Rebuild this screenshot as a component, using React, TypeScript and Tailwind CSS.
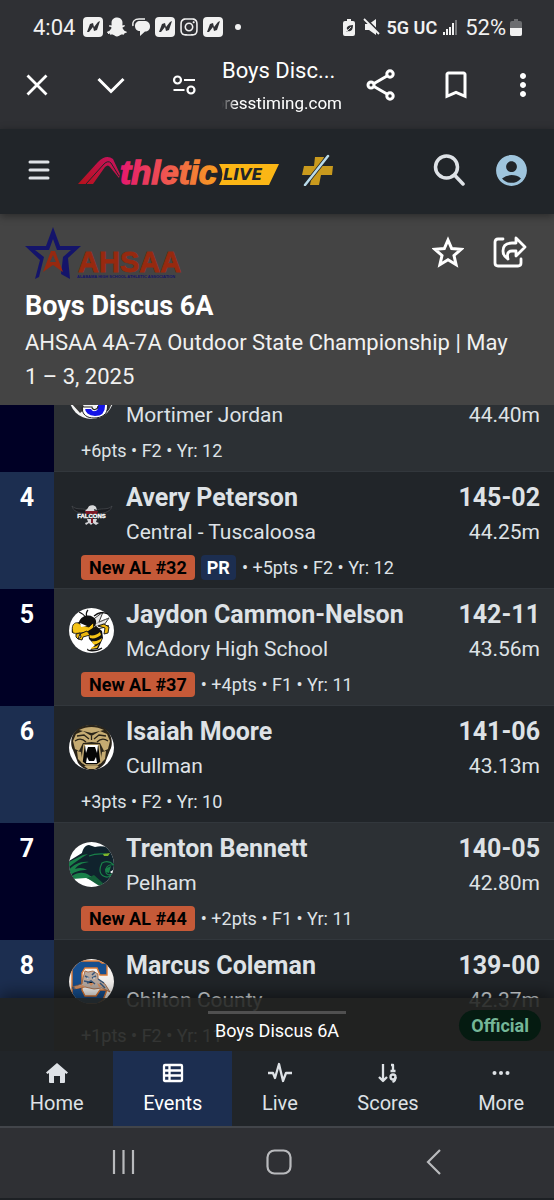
import type { ReactNode } from "react"
import { FaInstagram, FaSnapchatGhost } from "react-icons/fa"
import { MdAccountCircle, MdBookmarkBorder, MdMoreVert } from "react-icons/md"

type Result = {
  place: number
  name: string
  school: string
  mark: string
  metric: string
  rank?: string
  pr?: boolean
  points: number
  flight: number
  year: number
  logo: ReactNode
}

const JordanLogo = () => (
  <svg viewBox="0 0 45 45" className="size-[45px]" aria-hidden="true">
    <circle cx="22.5" cy="22.5" r="22.5" fill="#f4f4f4" />
    <path d="M2 29h11l3 6-5 4zM33 29h10l-3 7-5 3z" fill="#3a3a3a" />
    <path d="M24 12h13v20c0 8-5 11-11 11-7 0-11-4-11-9h8c0 3 5 3 5-1V18h-4z" fill="#1414e6" stroke="#fff" strokeWidth="2" />
    <path d="M13 33c0 8 5 11 12 11 8 0 14-4 14-12V11" fill="none" stroke="#222" />
    <path d="M13 33h10c0 4 6 3 6-1" fill="none" stroke="#222" strokeWidth="1.2" />
  </svg>
)

const FalconsLogo = () => (
  <svg viewBox="0 0 45 45" className="size-[45px]" aria-hidden="true">
    <path d="M20 20C14 16 8 20 3 15c1 5 6 7 14 8M26 20c6-4 12 0 17-5-1 5-6 7-14 8" fill="#191b1f" stroke="#4b4e52" strokeWidth=".7" />
    <path d="M19 17c0-3 6-4 8-1l1 3-3-1 1 4h-7l-3-2z" fill="#d9d9db" />
    <path d="M16 20h13l-1 3H17z" fill="#7d1926" />
    <path d="M18 28h10l-1 3 3 1-3 2-3-2-2 2-2-2-3 2-1-2 3-1z" fill="#d5d5d8" />
    <path d="M22 27h2v5h-2z" fill="#7d1926" />
    <text x="22.5" y="27" textAnchor="middle" fontSize="6" fontWeight="700" fill="#fff" stroke="#fff" strokeWidth=".3" fontFamily="Liberation Sans, sans-serif">FALCONS</text>
  </svg>
)

const HornetLogo = () => (
  <svg viewBox="0 0 45 45" className="size-[45px]" aria-hidden="true">
    <circle cx="22.5" cy="22.5" r="22.5" fill="#fff" />
    <path d="M22 13l12-9-4 10 10-4-5 7 5 1-11 3z" fill="#e8e8e8" stroke="#222" strokeWidth=".9" />
    <path d="M26 16l14-6M27 18l10-3" stroke="#777" strokeWidth=".6" />
    <path d="M10 4c3 1 5 3 7 6M19 2c-2 2-2 5-1 8M25 8c5-4 8-4 14-2" fill="none" stroke="#111" strokeWidth="1.3" />
    <path d="M10 14c2-6 9-8 14-5 4 2 4 7 1 10l-5 4H8L3 25c-1-5 2-9 7-11z" fill="#111" />
    <path d="M4 17c2-3 5-3 8 0l8 2 4-4c2 5-1 9-7 9-6 1-10 2-13 1-1-3-1-6 0-8z" fill="#f6c416" stroke="#111" strokeWidth=".8" />
    <path d="M11 15l7 3-6 1z" fill="#fff" />
    <path d="M19 23l8-5 6 5 1 7-5 11-8 1 5-5-6-6z" fill="#111" />
    <path d="M20 27c4 1 8 0 11-3l1 3c-4 3-7 4-11 3zM23 33c4 1 7-1 10-3l-1 3c-3 3-6 4-8 3zM23 39c3 0 5-1 7-3l-2 4-6 1z" fill="#f6c416" />
    <path d="M18 23l-7 3-2 5 4 1 1-3 7-2zM29 18l7 2-1 6 4-1 1-6-5-3zM7 26l4-1 1 4-3 2-2-2z" fill="#eab60e" stroke="#111" strokeWidth=".9" />
    <path d="M19 41c-2 2 8 3 14-1" fill="none" stroke="#111" strokeWidth="1.3" />
  </svg>
)

const BearcatLogo = () => (
  <svg viewBox="0 0 45 45" className="size-[45px]" aria-hidden="true">
    <circle cx="22.5" cy="22.5" r="22.5" fill="#fff" />
    <path d="M5 8C10 1 16 0 22.5 0S35 1 40 8c3 4 4 12 1 17l-5 13c-4 5-8 7-13.5 7S13 43 9 38L4 25C1 20 2 12 5 8z" fill="#2a2419" />
    <path d="M7 9l7-3 8.5 5L31 6l7 3 3 7-2 8-4 2-4-8-8.5-1-8.5 1-4 8-4-2-2-8z" fill="#c5ab72" />
    <path d="M10 5c8-4 17-4 25 0l-4 1-8.5 2L14 6z" fill="#c5ab72" />
    <path d="M8 11l7-1 5 4M37 11l-7-1-5 4M6 16c4-3 8-2 11 1M39 16c-4-3-8-2-11 1M22.5 11v4" fill="none" stroke="#2a2419" strokeWidth="1.3" />
    <path d="M8 26l4 1 2 12-5-5zM37 26l-4 1-2 12 5-5zM15 41h15l-4 3h-7z" fill="#c5ab72" />
    <path d="M15 20h15l2 17-4 3H17l-4-3z" fill="#060606" stroke="#c5ab72" strokeWidth="1.5" />
    <path d="M16 20h13l-1 8-2-6h-7l-2 6zM17 38l1-6 2 4h5l2-4 1 6z" fill="#fff" />
  </svg>
)

const PantherLogo = () => (
  <svg viewBox="0 0 45 45" className="size-[45px]" aria-hidden="true">
    <defs>
      <clipPath id="panther-clip"><circle cx="22.5" cy="22.5" r="22.5" /></clipPath>
    </defs>
    <g clipPath="url(#panther-clip)">
      <path d="M0 0h45v45H0z" fill="#fff" />
      <path d="M0 19l13-8c1-4 3-8 7-8l6 2c9-2 15 1 20 5v28L32 45 21 34 0 37z" fill="#10232d" />
      <path d="M0 20l14-7 5-1C12 16 6 20 0 25zM0 28c5-6 12-9 20-8-7 1-11 3-14 7 5-2 9-1 12 1-6 0-11 1-17 5zM3 34c6-4 12-4 17-1l8 7-11-4-14 1z" fill="#198049" />
      <path d="M20 14c7-3 12-2 17-2M33 21c5-3 9-1 12 2-4-1-7 1-8 4-1 5 2 7 6 5-4 6-12 2-12-4 0-3 1-5 2-7z" fill="none" stroke="#198049" strokeWidth="1.2" />
      <path d="M34 12l7-1-2 3h-4z" fill="#7fb42c" />
      <path d="M36 27l6-3-2 7-3-1z" fill="#198049" />
      <path d="M41 30l3-2v4z" fill="#fff" />
      <path d="M18 36l14 9 4-2-11-10z" fill="#14603a" />
    </g>
  </svg>
)

const TigerLogo = () => (
  <svg viewBox="0 0 45 45" className="size-[45px]" aria-hidden="true">
    <defs>
      <clipPath id="tiger-clip"><circle cx="22.5" cy="22.5" r="22.5" /></clipPath>
    </defs>
    <g clipPath="url(#tiger-clip)">
      <path d="M0 0h45v45H0z" fill="#f5f2ef" />
      <path d="M10 2h20l3 2h5v12h-7l-3-7H16l-3 5v17l3 6h11l4-6h7l-4 10-6 4H11l-8-8V10z" fill="#174f8f" stroke="#e07b34" strokeWidth="1.4" />
      <path d="M16 12l3 1 5-1 5 3v5l7 5 5 8-8-4-8 1-9-2-11 2-2-2 10-3 1-6z" fill="#b8aaa1" stroke="#9b5a32" strokeWidth=".8" />
      <path d="M16 17l4 2M27 17l-4 2M18 24l4-2 4 3M3 29l10-1M31 24l5 5M15 22l5 1M29 20l6 4M26 13l-3 3" stroke="#39577b" strokeWidth="1.5" />
      <path d="M20 24h5l-3 3zM5 28l9-2 2 2-9 2zM28 24l5 3-3 1z" fill="#d98f5d" />
      <circle cx="19" cy="19" r=".7" fill="#fff" />
      <circle cx="25" cy="19" r=".7" fill="#fff" />
    </g>
  </svg>
)

const results: Result[] = [
  { place: 3, name: "", school: "Mortimer Jordan", mark: "", metric: "44.40m", points: 6, flight: 2, year: 12, logo: <JordanLogo /> },
  { place: 4, name: "Avery Peterson", school: "Central - Tuscaloosa", mark: "145-02", metric: "44.25m", rank: "New AL #32", pr: true, points: 5, flight: 2, year: 12, logo: <FalconsLogo /> },
  { place: 5, name: "Jaydon Cammon-Nelson", school: "McAdory High School", mark: "142-11", metric: "43.56m", rank: "New AL #37", points: 4, flight: 1, year: 11, logo: <HornetLogo /> },
  { place: 6, name: "Isaiah Moore", school: "Cullman", mark: "141-06", metric: "43.13m", points: 3, flight: 2, year: 10, logo: <BearcatLogo /> },
  { place: 7, name: "Trenton Bennett", school: "Pelham", mark: "140-05", metric: "42.80m", rank: "New AL #44", points: 2, flight: 1, year: 11, logo: <PantherLogo /> },
  { place: 8, name: "Marcus Coleman", school: "Chilton County", mark: "139-00", metric: "42.37m", points: 1, flight: 2, year: 11, logo: <TigerLogo /> },
]

const NewsIcon = () => (
  <svg viewBox="0 0 20 20" className="size-5" aria-hidden="true">
    <rect width="20" height="20" rx="4" fill="#f1f1f1" />
    <path d="M4 15l3-8 3-1 1 4 4-5 2-1-3 9-3 1-1-4-4 5z" fill="#2f3034" />
  </svg>
)

const StatusBar = () => (
  <div className="flex h-[54px] items-center justify-between pl-[33px] pr-8 text-[#f1f1f1]">
    <div className="flex items-center gap-1">
      <span className="mr-1 text-[22px]">4:04</span>
      <NewsIcon />
      <FaSnapchatGhost className="size-5" />
      <svg viewBox="0 0 20 20" className="size-5" aria-hidden="true">
        <path d="M9 4h4c4 0 6 2 6 5.500s-2 5-5 5L9 19v-5c-3 0-5-2-5-5s2-5 5-5z" fill="#f1f1f1" />
        <path d="M2 9C1 4 4 2 8 2h6" fill="none" stroke="#f1f1f1" strokeWidth="1.4" />
      </svg>
      <NewsIcon />
      <FaInstagram className="size-5" />
      <NewsIcon />
      <span className="ml-2 size-[6px] rounded-full bg-[#f1f1f1]" />
    </div>
    <div className="flex items-center">
      <svg viewBox="0 0 12 17" className="h-[17px] w-3" aria-hidden="true">
        <path d="M4 0h4v2h2q2 0 2 2v11q0 2-2 2H2q-2 0-2-2V4q0-2 2-2h2z" fill="#f1f1f1" />
        <path d="M3 13l2-2c-3-2 0-5 5-5 0 5-2 7-5 6" fill="#2f3034" />
        <path d="M4 12l4-4" stroke="#f1f1f1" strokeWidth=".8" />
      </svg>
      <svg viewBox="0 0 18 18" className="ml-2 size-[18px]" aria-hidden="true">
        <path d="M2 6h4l7-5v16l-7-5H2z" fill="#f1f1f1" />
        <path d="M2 0l16 16" stroke="#2f3034" strokeWidth="2" />
        <path d="M1 1l15 15" stroke="#f1f1f1" strokeWidth="1.8" />
      </svg>
      <span className="ml-[6px] text-[18px] font-semibold">5G UC</span>
      <svg viewBox="0 0 14 15" className="ml-[6px] h-[15px] w-[14px]" aria-hidden="true">
        <path d="M1 15v-3M4 15v-6M7 15V7M10 15V3" stroke="#f1f1f1" strokeWidth="2" />
        <path d="M13 15V0" stroke="#77787b" strokeWidth="2" />
      </svg>
      <span className="ml-2 text-[22px]">52%</span>
      <svg viewBox="0 0 12 17" className="ml-1 h-[17px] w-3" aria-hidden="true">
        <path d="M4 0h4v2h2q2 0 2 2v11q0 2-2 2H2q-2 0-2-2V4q0-2 2-2h2z" fill="#6c6d70" />
        <path d="M0 9h12v6q0 2-2 2H2q-2 0-2-2z" fill="#f1f1f1" />
      </svg>
    </div>
  </div>
)

const BrowserBar = () => (
  <div className="flex h-[75px] items-center pb-[13px] pl-[25px] pr-6 text-white">
    <button aria-label="Close tab">
      <svg viewBox="0 0 24 24" className="size-6" fill="none" stroke="currentColor" strokeWidth="2.8"><path d="M2.500 2.500l19 19M21.500 2.500l-19 19" /></svg>
    </button>
    <button aria-label="Minimize" className="ml-12">
      <svg viewBox="0 0 28 24" className="h-6 w-7" fill="none" stroke="currentColor" strokeWidth="3"><path d="M1.500 6L14 18.500 26.500 6" /></svg>
    </button>
    <button aria-label="Site settings" className="ml-[47px]">
      <svg viewBox="0 0 24 24" className="size-6" fill="none" stroke="currentColor" strokeWidth="2.200">
        <circle cx="5.500" cy="7" r="3.500" />
        <circle cx="19" cy="17" r="3.500" />
        <path d="M12 7h11M1.500 17h11" />
      </svg>
    </button>
    <div className="ml-[26px] w-[120px] overflow-hidden whitespace-nowrap pt-1">
      <div className="text-[22px] leading-8">Boys Disc...</div>
      <div className="flex justify-end text-[17px] leading-8 [mask-image:linear-gradient(to_right,transparent,black_14px)]">presstiming.com</div>
    </div>
    <div className="ml-auto flex items-center gap-[42px]">
      <button aria-label="Share link">
        <svg viewBox="0 0 30 32" className="h-8 w-[30px]" fill="none" stroke="currentColor" strokeWidth="3">
          <circle cx="5" cy="16" r="3" />
          <circle cx="24" cy="5" r="3.200" />
          <circle cx="24" cy="27" r="3.200" />
          <path d="M8 14.500L21 7M8 17.500L21 25" />
        </svg>
      </button>
      <button aria-label="Bookmark"><MdBookmarkBorder className="size-9" /></button>
      <button aria-label="Browser menu" className="-mx-[11px]"><MdMoreVert className="size-9" /></button>
    </div>
  </div>
)

const AppHeader = () => (
  <header className="relative z-10 flex h-[85px] items-center bg-[#212529] px-7 pb-[3px] text-[#dee2e6] shadow-[0_2px_8px_rgba(0,0,0,0.4)]">
    <button aria-label="Menu">
      <svg viewBox="0 0 22 20" className="h-5 w-[22px]" stroke="currentColor" strokeWidth="3" strokeLinecap="round"><path d="M2 2h18M2 10h18M2 18h18" /></svg>
    </button>
    <a href="#home" aria-label="Athletic Live" className="ml-7">
      <svg viewBox="0 0 202 32" className="h-8 w-[202px]">
        <defs>
          <linearGradient id="word" gradientUnits="userSpaceOnUse" x1="42" y1="0" x2="142" y2="0">
            <stop offset="0" stopColor="#e5176e" />
            <stop offset=".5" stopColor="#ef5a4e" />
            <stop offset="1" stopColor="#f7a21c" />
          </linearGradient>
          <linearGradient id="track" x1="0" y1="1" x2="1" y2="0">
            <stop offset="0" stopColor="#b5121b" />
            <stop offset="1" stopColor="#c91361" />
          </linearGradient>
        </defs>
        <path d="M0 30L20 8q8-8 15-3l7 15-1 4-9-11q-2-3-5 0L15 30z" fill="url(#track)" />
        <path d="M8 30L26 10q4-4 7-1l8 13" fill="none" stroke="#212529" />
        <text x="42" y="30" fontFamily="Liberation Sans, Arial, sans-serif" fontSize="33" fontWeight="700" fontStyle="italic" fill="url(#word)" stroke="url(#word)" strokeWidth="1.4">thletic</text>
        <path d="M141 10h60l-10 21h-50q7-11 0-21z" fill="#fbb615" />
        <text x="145" y="26" fontFamily="DejaVu Sans, sans-serif" fontSize="16" fontWeight="700" fontStyle="italic" fill="#212529">LIVE</text>
      </svg>
    </a>
    <a href="#plus" aria-label="Plus" className="ml-[22px]">
      <svg viewBox="0 0 32 32" className="size-8">
        <path d="M13 3h9l-2 9h11l-1 9H19l-2 10H8l2-10H0l2-9h10z" fill="#c99a1d" />
        <path d="M26 2L3 31" stroke="#212529" strokeWidth="4" />
        <path d="M26 2L3 31" stroke="#b9dbea" strokeWidth="2.500" strokeLinecap="round" />
      </svg>
    </a>
    <button aria-label="Search" className="ml-auto">
      <svg viewBox="0 0 32 32" className="size-8" fill="none" stroke="currentColor" strokeWidth="3.500" strokeLinecap="round">
        <circle cx="13.500" cy="13" r="11" />
        <path d="M21.500 21L30 30" />
      </svg>
    </button>
    <button aria-label="Account" className="-mr-1 ml-7"><MdAccountCircle className="size-[37px] text-[#9fc5dd]" /></button>
  </header>
)

const EventHeader = () => (
  <section className="bg-[#444444] px-[25px] pb-[11px] pt-3 text-white">
    <div className="flex items-start justify-between">
      <svg viewBox="0 0 160 54" className="h-[54px] w-40" role="img" aria-label="AHSAA">
        <path d="M28 1l7 19h21L43 32l2 21-9-5 2-17 8-7H32L28 13l-4 11H10l9 7-5 20-4 2 5-19L0 20h21z" fill="#14146a" />
        <path d="M26 25h4l8 21-10-7-10 7zM28 29l-3 7h6z" fill="#97290f" fillRule="evenodd" />
        <text x="53" y="46" fontFamily="Liberation Sans, Arial, sans-serif" fontSize="29" fontWeight="700" fill="#97290f" stroke="#97290f" strokeWidth=".8">AHSAA</text>
        <text x="52" y="52" fontFamily="Liberation Sans, Arial, sans-serif" fontSize="4" fontWeight="700" fill="#14146a">ALABAMA HIGH SCHOOL ATHLETIC ASSOCIATION</text>
      </svg>
      <div className="flex items-center gap-[29px] pr-[2px] pt-[10px]">
        <button aria-label="Favorite">
          <svg viewBox="0 0 32 32" className="size-8" fill="none" stroke="currentColor" strokeWidth="3"><path d="M16 4l3.700 8.500 9.300.8-7 6.200 2.100 9.200-8.100-4.900-8.100 4.900L10 19.500l-7-6.200 9.300-.8z" /></svg>
        </button>
        <button aria-label="Share event">
          <svg viewBox="0 0 34 32" className="h-8 w-[34px]" fill="none" stroke="currentColor" strokeWidth="2.800" strokeLinecap="round" strokeLinejoin="round">
            <path d="M10 3H5q-3 0-3 3v21q0 3 3 3h20q3 0 3-3v-4" />
            <path d="M23 2l9 9-9 9v-5h-4q-6 0-4 8-5-3-5-8 0-8 9-8h4z" />
          </svg>
        </button>
      </div>
    </div>
    <h1 className="mt-[10px] text-[27px] font-bold leading-8">Boys Discus 6A</h1>
    <p className="mt-1 pr-3 text-[22px] leading-[34px] text-[#f1f1f1]">AHSAA 4A-7A Outdoor State Championship | May 1 – 3, 2025</p>
  </section>
)

const ResultRow = ({ result }: { result: Result }) => {
  const odd = result.place % 2 === 1
  return (
    <li className={odd ? "flex bg-[#2c3034]" : "flex bg-[#212529]"}>
      <div className={odd ? "w-[54px] shrink-0 bg-[#000025] pt-[9px] text-center text-[25px] font-bold leading-[34px] text-white" : "w-[54px] shrink-0 bg-[#1c2e50] pt-[9px] text-center text-[25px] font-bold leading-[34px] text-white"}>
        {result.place}
      </div>
      <div className="min-w-0 flex-1 border-b border-[#32373c] pb-[3px] pl-[15px] pr-[14px] pt-[9px]">
        <div className="flex">
          <div className="w-[57px] shrink-0 pt-[10px]">{result.logo}</div>
          <div className="min-w-0 flex-1 text-[21px] leading-[34px]">
            <h2 className="min-h-[34px] text-[25px] font-bold leading-[34px]">{result.name}</h2>
            <p>{result.school}</p>
          </div>
          <div className="text-right text-[21px] leading-[34px]">
            <p className="min-h-[34px] text-[25px] font-bold leading-[34px]">{result.mark}</p>
            <p>{result.metric}</p>
          </div>
        </div>
        <div className="flex h-9 items-center gap-[6px] pl-3 text-[18px]">
          {result.rank && <span className="rounded bg-[#c55a38] px-2 font-bold leading-[25px] text-black">{result.rank}</span>}
          {result.pr && <span className="rounded bg-[#1c2e50] px-[6px] font-bold leading-[25px] text-white">PR</span>}
          <span>
            {result.rank && "• "}+{result.points}pts • F{result.flight} • Yr: {result.year}
          </span>
        </div>
      </div>
    </li>
  )
}

const navItems = [
  {
    label: "Home",
    icon: <path d="M12 2L1 11.500 2.500 13 4 12v9q0 1 1 1h4v-7h6v7h4q1 0 1-1v-9l1.500 1 1.500-1.500z" fill="currentColor" stroke="none" />,
  },
  {
    label: "Events",
    icon: <path d="M4 4h16q1 0 1 1v14q0 1-1 1H4q-1 0-1-1V5q0-1 1-1zM3 9.500h18M3 14.500h18M8.500 4v16" />,
  },
  {
    label: "Live",
    icon: <path d="M0 12h5l2 5L11 3l4 17 3-8h6" />,
  },
  {
    label: "Scores",
    icon: <path d="M7 3v17M3 16l4 4 4-4M15 4h2v6M14.500 10h5" />,
    extra: <><circle cx="17" cy="16" r="2.500" /><path d="M19.500 16q0 4-3 5" /></>,
  },
  {
    label: "More",
    icon: <g fill="currentColor" stroke="none"><circle cx="5.500" cy="12" r="2" /><circle cx="12" cy="12" r="2" /><circle cx="18.500" cy="12" r="2" /></g>,
  },
]

const BottomNav = () => (
  <nav className="flex h-[75px] bg-[#212529] text-[20px] text-[#dee2e6]">
    {navItems.map(({ label, icon, extra }) => (
      <a
        key={label}
        href={`#${label.toLowerCase()}`}
        className={label === "Events" ? "flex flex-auto flex-col items-center bg-[#1c2e50] pt-[10px] text-white" : "flex flex-auto flex-col items-center pt-[10px]"}
      >
        <svg viewBox="0 0 24 24" className="size-6" fill="none" stroke="currentColor" strokeWidth="2.300" strokeLinejoin="round" aria-hidden="true">
          {icon}
          {extra}
        </svg>
        <span className="mt-[3px] leading-[30px]">{label}</span>
      </a>
    ))}
  </nav>
)

const SystemNav = () => (
  <div className="flex h-[74px] items-center justify-between border-b-2 border-t-2 border-b-[#1d2024] border-t-[#42454a] bg-[#2f3034] pb-[3px] pl-[110px] pr-[106px] text-[#b9babd]">
    <button aria-label="Recent apps">
      <svg viewBox="0 0 28 28" className="size-7" stroke="currentColor" strokeWidth="2.200"><path d="M4 2v24M13.500 2v24M23 2v24" /></svg>
    </button>
    <button aria-label="Home screen">
      <svg viewBox="0 0 28 28" className="size-7" fill="none" stroke="currentColor" strokeWidth="2.200"><rect x="2.500" y="2.500" width="23" height="23" rx="7" /></svg>
    </button>
    <button aria-label="Back">
      <svg viewBox="0 0 28 28" className="size-7" fill="none" stroke="currentColor" strokeWidth="2.200"><path d="M20 2L8 14l12 12" /></svg>
    </button>
  </div>
)

const App = () => {
  return (
    <div className="flex h-screen flex-col overflow-hidden bg-[#212529] font-[Roboto,sans-serif]">
      <div className="bg-[#2f3034]">
        <StatusBar />
        <BrowserBar />
      </div>
      <AppHeader />
      <EventHeader />
      <main className="relative min-h-0 flex-1 overflow-hidden text-[#dee2e6]">
        <ol className="-mt-[50px]">
          {results.map((result) => (
            <ResultRow key={result.place} result={result} />
          ))}
        </ol>
        <div className="absolute inset-x-0 bottom-0 flex h-[53px] flex-col items-center bg-[#212220]/90 pt-[13px] text-white shadow-[0_-4px_16px_rgba(0,0,0,0.5)]">
          <div className="h-[3px] w-[138px] bg-[#505050]" />
          <p className="mt-1 text-[18px] leading-[26px]">Boys Discus 6A</p>
          <span className="absolute right-[13px] top-3 rounded-full bg-[#051b11] px-3 text-[18px] font-bold leading-[31px] text-[#75b798]">Official</span>
        </div>
      </main>
      <BottomNav />
      <SystemNav />
    </div>
  )
}

export default App
